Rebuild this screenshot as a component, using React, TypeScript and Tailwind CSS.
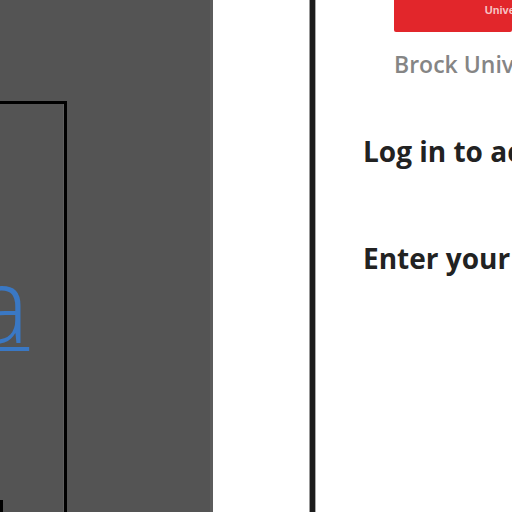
export default function App() {
  return (
    <div className="flex h-[512px] w-[512px] overflow-hidden bg-white font-['Open_Sans',sans-serif]">
      {/* left editor panel */}
      <div className="flex w-[213px] shrink-0 bg-[#545454]">
        <div className="relative flex-1">
          <div className="mt-[101px] flex h-[420px] w-[67px] border-r-[3px] border-t-[3px] border-black">
            <div className="flex-1 border-r border-[#606060] pt-[148px]">
              <a className="-ml-[27px] block text-[106px] font-light leading-[100px] text-[#3a78c4] underline decoration-[4px] underline-offset-[4px]">
                a
              </a>
            </div>
          </div>
          <div className="absolute bottom-0 left-0 h-[12px] w-[3px] bg-black" />
        </div>
        <div className="w-[3px] bg-[#5c5c5c]" />
      </div>

      <div className="w-[96px] shrink-0 bg-white" />

      {/* divider */}
      <div className="flex w-[7px] shrink-0">
        <div className="w-[1px] bg-[#999]" />
        <div className="w-[5px] bg-[#1c1c1c]" />
        <div className="w-[1px] bg-[#aaa]" />
      </div>

      {/* login card */}
      <div className="min-w-0 flex-1 pl-[47px]">
        <div className="ml-[31px] flex h-[32px] items-start justify-end overflow-hidden rounded-b-[2px] bg-[#e2262b] pt-[4px]">
          <span className="-mr-[26px] whitespace-nowrap font-['Liberation_Sans',sans-serif] text-[11px] font-bold leading-[12px] text-[#f6c4c4]">
            University
          </span>
        </div>
        <div className="ml-[31px] mt-[17px] whitespace-nowrap text-[23px] font-semibold leading-[30px] text-[#858585]">
          Brock University
        </div>
        <div className="mt-[54px] whitespace-nowrap text-[28px] font-bold leading-[36px] text-[#222]">
          Log in to access
        </div>
        <div className="mt-[71px] whitespace-nowrap text-[28px] font-bold leading-[36px] text-[#222]">
          Enter your email
        </div>
      </div>
    </div>
  )
}
